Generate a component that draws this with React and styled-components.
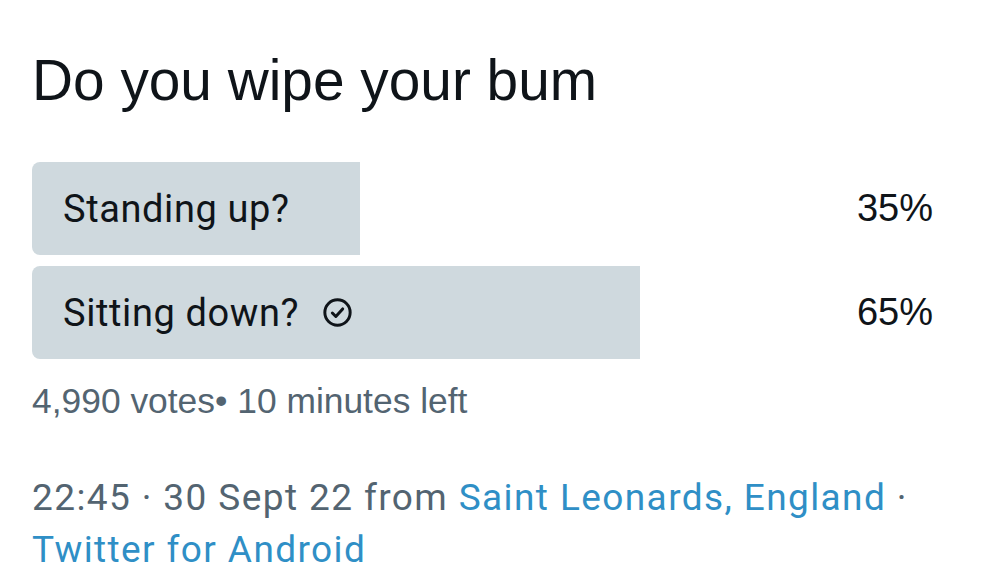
import React from 'react';
import styled, { createGlobalStyle } from 'styled-components';

const GlobalStyle = createGlobalStyle`
  body {
    margin: 0;
    background: #ffffff;
  }
`;

const Card = styled.div`
  padding: 47px 32px 0 32px;
  background: #ffffff;
  height: 577px;
  box-sizing: border-box;
  overflow: hidden;
`;

const Question = styled.h1`
  margin: 0;
  font-family: "Liberation Sans", Arial, sans-serif;
  font-weight: 400;
  font-size: 56.8px;
  line-height: 67px;
  color: #0f1419;
`;

const Options = styled.div`
  display: flex;
  flex-direction: column;
  gap: 11px;
  margin-top: 48px;
`;

const Option = styled.div`
  position: relative;
  height: 93px;
  display: flex;
  align-items: center;
  justify-content: space-between;
  padding: 0 35px 0 31px;
`;

const Fill = styled.div`
  position: absolute;
  left: 0;
  top: 0;
  bottom: 0;
  background: #cfd9de;
  border-radius: 8px 0 0 8px;
`;

const Label = styled.span`
  position: relative;
  display: flex;
  align-items: center;
  gap: 23px;
  font-family: Roboto, "Liberation Sans", sans-serif;
  font-size: 38px;
  letter-spacing: 0.6px;
  color: #0f1419;
`;

const Percent = styled.span`
  position: relative;
  font-family: "Liberation Sans", Arial, sans-serif;
  font-size: 38px;
  color: #0f1419;
`;

const Meta = styled.div`
  margin-top: 21px;
  font-family: "Liberation Sans", Arial, sans-serif;
  font-size: 35.4px;
  line-height: 42px;
  color: #536471;
`;

const Footer = styled.div`
  margin-top: 50px;
  font-family: Roboto, "Liberation Sans", sans-serif;
  font-size: 37px;
  letter-spacing: 1.4px;
  line-height: 52px;
  color: #536471;
`;

const Link = styled.span`
  color: #2f8fc6;
`;

const CheckIcon = () => (
  <svg width="31" height="31" viewBox="0 0 24 24" fill="none" stroke="#0f1419" strokeWidth="2.3" strokeLinecap="round" strokeLinejoin="round">
    <circle cx="12" cy="12" r="9.8" />
    <path d="M8 12.4l2.7 2.7L16 9.2" />
  </svg>
);

const options = [
  { label: 'Standing up?', pct: 35 },
  { label: 'Sitting down?', pct: 65, winner: true },
];

export default function App() {
  return (
    <>
      <GlobalStyle />
      <Card>
        <Question>Do you wipe your bum</Question>
        <Options>
          {options.map((o) => (
            <Option key={o.label}>
              <Fill style={{ width: `${o.pct}%` }} />
              <Label>
                {o.label}
                {o.winner && <CheckIcon />}
              </Label>
              <Percent>{o.pct}%</Percent>
            </Option>
          ))}
        </Options>
        <Meta>4,990 votes• 10 minutes left</Meta>
        <Footer>
          22:45 · 30 Sept 22 from <Link>Saint Leonards, England</Link> ·
          <br />
          <Link>Twitter for Android</Link>
        </Footer>
      </Card>
    </>
  );
}
